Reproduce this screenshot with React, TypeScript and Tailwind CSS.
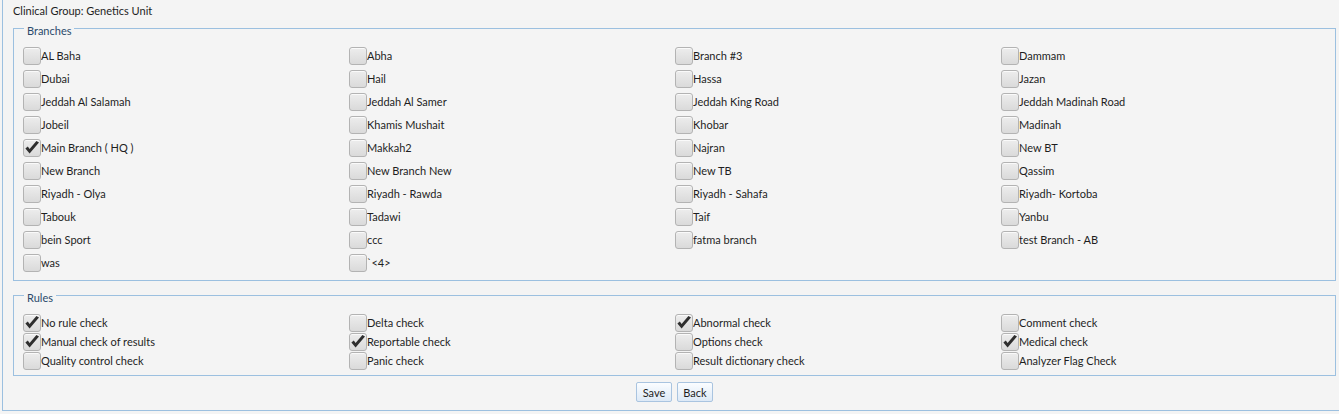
import React from "react";

const branches = [
  ["AL Baha", false], ["Abha", false], ["Branch #3", false], ["Dammam", false],
  ["Dubai", false], ["Hail", false], ["Hassa", false], ["Jazan", false],
  ["Jeddah Al Salamah", false], ["Jeddah Al Samer", false], ["Jeddah King Road", false], ["Jeddah Madinah Road", false],
  ["Jobeil", false], ["Khamis Mushait", false], ["Khobar", false], ["Madinah", false],
  ["Main Branch ( HQ )", true], ["Makkah2", false], ["Najran", false], ["New BT", false],
  ["New Branch", false], ["New Branch New", false], ["New TB", false], ["Qassim", false],
  ["Riyadh - Olya", false], ["Riyadh - Rawda", false], ["Riyadh - Sahafa", false], ["Riyadh- Kortoba", false],
  ["Tabouk", false], ["Tadawi", false], ["Taif", false], ["Yanbu", false],
  ["bein Sport", false], ["ccc", false], ["fatma branch", false], ["test Branch - AB", false],
  ["was", false], ["`<4>", false],
] as [string, boolean][];

const rules = [
  ["No rule check", true], ["Delta check", false], ["Abnormal check", true], ["Comment check", false],
  ["Manual check of results", true], ["Reportable check", true], ["Options check", false], ["Medical check", true],
  ["Quality control check", false], ["Panic check", false], ["Result dictionary check", false], ["Analyzer Flag Check", false],
] as [string, boolean][];

function Box({ checked }: { checked: boolean }) {
  return (
    <span className="relative w-[18px] h-[18px] shrink-0 rounded-[3px] border border-[#b3b3b3] bg-gradient-to-b from-[#ededed] to-[#dadada] shadow-[inset_0_1px_0_#fafafa]">
      {checked && (
        <svg className="absolute left-[0px] top-[0px]" width="16" height="16" viewBox="0 0 16 16">
          <path d="M1.4 8.4 L5.6 13.6 L15 2.6 L12.4 0.9 L5.6 9 L3.8 6.6 Z" fill="#2e2e2e" />
        </svg>
      )}
    </span>
  );
}

function Item({ label, checked, h }: { label: string; checked: boolean; h: string }) {
  return (
    <div className={`flex items-center ${h}`}>
      <Box checked={checked} />
      <span className="text-[11px] text-[#1e1e1e] whitespace-nowrap leading-none">{label}</span>
    </div>
  );
}

function Group({ title, children, cls }: { title: string; children: React.ReactNode; cls: string }) {
  return (
    <div className={`relative border border-[#9cc0e0] pl-[9px] ${cls}`}>
      <span className="absolute left-[10px] top-[-5px] px-[3px] bg-[#f4f4f4] text-[11px] leading-[14px] text-[#2b4a6b]">
        {title}
      </span>
      {children}
    </div>
  );
}

export default function App() {
  return (
    <div className="w-full h-[414px] bg-[#f4f4f4]" style={{ fontFamily: "Lato, 'Noto Sans', sans-serif" }}>
      <div className="ml-[2px] h-[411px] border-l border-b border-[#9cc0e0] pl-[10px] pr-[3px]">
        <div className="pt-[4px] h-[28px] text-[11px] text-[#1e1e1e] leading-[14px]">Clinical Group: Genetics Unit</div>
        <Group title="Branches" cls="h-[253px] pt-[15px]">
          <div className="grid grid-cols-[326px_326px_326px_326px]">
            {branches.map(([l, c], i) => (
              <Item key={i} label={l} checked={c} h="h-[23px]" />
            ))}
          </div>
        </Group>
        <Group title="Rules" cls="h-[81px] pt-[17px] mt-[14px]">
          <div className="grid grid-cols-[326px_326px_326px_326px]">
            {rules.map(([l, c], i) => (
              <Item key={i} label={l} checked={c} h="h-[19px]" />
            ))}
          </div>
        </Group>
        <div className="flex justify-center gap-[5px] mt-[6px]">
          <button className="h-[20px] w-[36px] border border-[#a9c4e0] rounded-[2px] bg-gradient-to-b from-[#fbfdff] to-[#dde9f6] text-[11px] text-[#1e1e1e] leading-none">Save</button>
          <button className="h-[20px] w-[36px] border border-[#a9c4e0] rounded-[2px] bg-gradient-to-b from-[#fbfdff] to-[#dde9f6] text-[11px] text-[#1e1e1e] leading-none">Back</button>
        </div>
      </div>
    </div>
  );
}
